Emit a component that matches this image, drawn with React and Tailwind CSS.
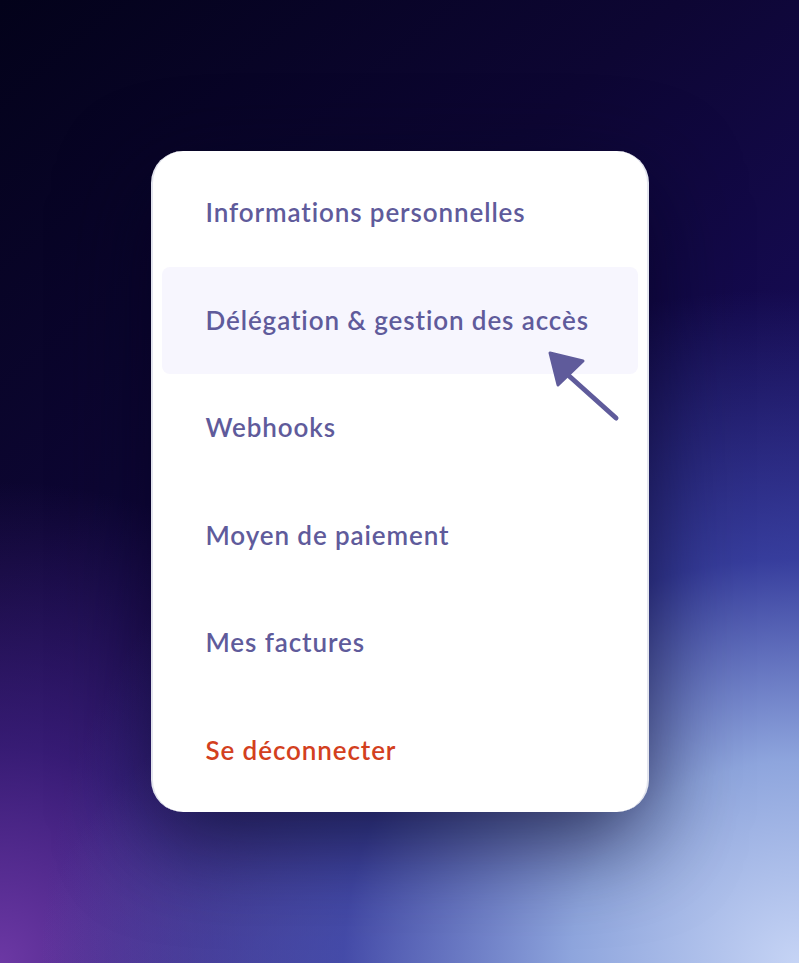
import { useState } from "react";

const items = [
  { label: "Informations personnelles" },
  { label: "Délégation & gestion des accès", active: true },
  { label: "Webhooks" },
  { label: "Moyen de paiement" },
  { label: "Mes factures" },
  { label: "Se déconnecter", danger: true },
];

function Cursor() {
  return (
    <svg
      className="pointer-events-none absolute left-[395px] top-[200px]"
      width="76"
      height="74"
      viewBox="0 0 76 74"
    >
      <path d="M68 67 L20 24" stroke="#5f5b9b" strokeWidth="5" strokeLinecap="round" />
      <path d="M2 2 L35 10 L10 34 Z" fill="#5f5b9b" stroke="#5f5b9b" strokeWidth="3" strokeLinejoin="round" />
    </svg>
  );
}

export default function App() {
  const [hovered, setHovered] = useState(1);

  return (
    <div className="flex min-h-screen w-full items-center justify-center bg-[radial-gradient(ellipse_95%_70%_at_100%_100%,#c6d4f5_0%,#8ea5dd_30%,rgba(64,76,175,0.75)_60%,transparent_100%),radial-gradient(ellipse_45%_30%_at_50%_100%,rgba(110,105,170,0.7)_0%,transparent_100%),radial-gradient(ellipse_60%_50%_at_0%_100%,#6c38a4_0%,rgba(80,40,150,0.6)_45%,transparent_100%),linear-gradient(140deg,#03021a_0%,#0d0633_35%,#180c5c_70%,#2a2a9a_100%)] font-['Lato','Noto_Sans',sans-serif]">
      <div className="relative w-[498px] rounded-[32px] border-x-2 border-[#e3e5ee] bg-white px-[9px] py-2 shadow-[0_30px_90px_rgba(5,3,30,0.65)]">
        {items.map((item, i) => (
          <div
            key={item.label}
            onMouseEnter={() => setHovered(i)}
            className={
              "flex h-[107.5px] items-center rounded-[8px] pl-[44px] text-[26px] font-semibold tracking-[0.9px] " +
              (item.danger ? "text-[#d3401e] " : "text-[#5f5b9b] ") +
              (hovered === i ? "bg-[#f7f6fe]" : "bg-white")
            }
          >
            {item.label}
          </div>
        ))}
        <Cursor />
      </div>
    </div>
  );
}
